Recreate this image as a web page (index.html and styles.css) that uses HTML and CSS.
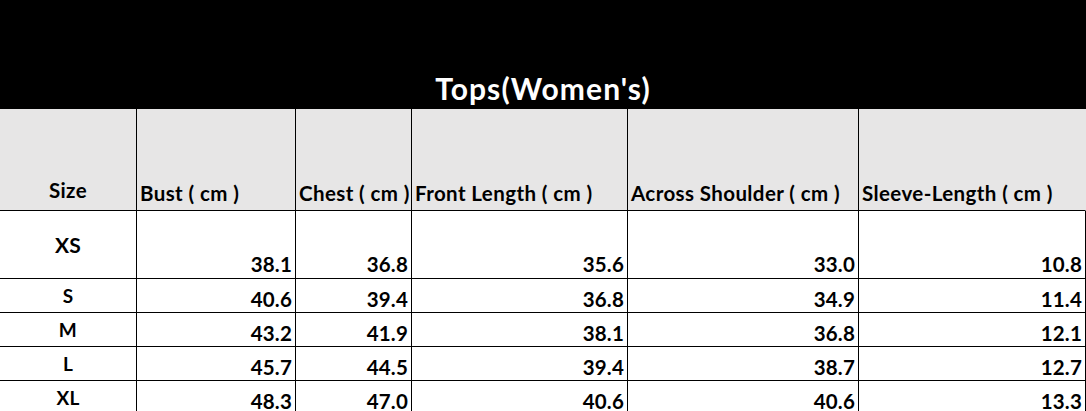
FILE: index.html
```html
<!DOCTYPE html>
<html lang="en">
<head>
<meta charset="utf-8">
<title>Tops(Women's)</title>
<link rel="stylesheet" href="styles.css">
</head>
<body>
<div class="sheet">
  <div class="title-band"><h1 class="title">Tops(Women's)</h1></div>
  <div class="grid">
    <div class="cell head head-size">Size</div>
    <div class="cell head">Bust ( cm )</div>
    <div class="cell head">Chest ( cm )</div>
    <div class="cell head">Front Length ( cm )</div>
    <div class="cell head">Across Shoulder ( cm )</div>
    <div class="cell head last">Sleeve-Length ( cm )</div>

    <div class="cell label label-xs">XS</div>
    <div class="cell num num-xs">38.1</div>
    <div class="cell num num-xs">36.8</div>
    <div class="cell num num-xs">35.6</div>
    <div class="cell num num-xs">33.0</div>
    <div class="cell num num-xs">10.8</div>

    <div class="cell label">S</div>
    <div class="cell num">40.6</div>
    <div class="cell num">39.4</div>
    <div class="cell num">36.8</div>
    <div class="cell num">34.9</div>
    <div class="cell num">11.4</div>

    <div class="cell label">M</div>
    <div class="cell num">43.2</div>
    <div class="cell num">41.9</div>
    <div class="cell num">38.1</div>
    <div class="cell num">36.8</div>
    <div class="cell num">12.1</div>

    <div class="cell label">L</div>
    <div class="cell num">45.7</div>
    <div class="cell num">44.5</div>
    <div class="cell num">39.4</div>
    <div class="cell num">38.7</div>
    <div class="cell num">12.7</div>

    <div class="cell label">XL</div>
    <div class="cell num">48.3</div>
    <div class="cell num">47.0</div>
    <div class="cell num">40.6</div>
    <div class="cell num">40.6</div>
    <div class="cell num">13.3</div>
  </div>
</div>
</body>
</html>
```

FILE: styles.css
```css
html, body {
  margin: 0;
  padding: 0;
  overflow: hidden;
  background: #ffffff;
}

.sheet {
  width: 1086px;
  font-family: "Lato", "Liberation Sans", sans-serif;
  font-weight: 700;
  color: #000000;
}

.title-band {
  height: 109px;
  background: #000000;
  display: flex;
  align-items: flex-end;
  justify-content: center;
}

.title {
  margin: 0 0 3px 0;
  font-size: 30px;
  line-height: 36px;
  letter-spacing: 1.1px;
  font-weight: 700;
  color: #ffffff;
}

.grid {
  display: grid;
  grid-template-columns: 137px 159px 116px 216px 231px 227px;
  grid-template-rows: 102px 68px 34px 34px 34px 34px;
}

.cell {
  box-sizing: border-box;
  border-right: 1px solid #000000;
  border-bottom: 1px solid #000000;
  display: flex;
  white-space: nowrap;
}

.head {
  background: #e7e6e6;
  align-items: flex-end;
  justify-content: flex-start;
  padding: 0 0 5px 3px;
  font-size: 20.5px;
  line-height: 24px;
  letter-spacing: 0.4px;
}

.head.last {
  border-right-color: #e7e6e6;
}

.head-size {
  justify-content: center;
  padding: 0 0 8px 0;
}

.label {
  align-items: center;
  justify-content: center;
  font-size: 19px;
  line-height: 22px;
  letter-spacing: 0.3px;
}

.label-xs {
  font-size: 21px;
  line-height: 24px;
}

.num {
  align-items: flex-end;
  justify-content: flex-end;
  padding: 0 3px 1px 0;
  font-size: 20.5px;
  line-height: 24px;
  letter-spacing: 0.2px;
}

.num-xs {
  padding-bottom: 2px;
}
```
